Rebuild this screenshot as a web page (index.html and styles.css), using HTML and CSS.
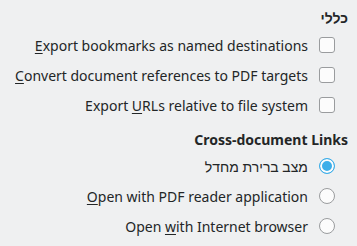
FILE: index.html
```html
<!DOCTYPE html>
<html>
<head>
<meta charset="utf-8">
<link rel="stylesheet" href="styles.css">
</head>
<body>
<div class="page">
  <div class="heading h1">כללי</div>
  <div class="row"><span class="label"><u>E</u>xport bookmarks as named destinations</span><span class="check"></span></div>
  <div class="row"><span class="label"><u>C</u>onvert document references to PDF targets</span><span class="check"></span></div>
  <div class="row"><span class="label">Export <u>U</u>RLs relative to file system</span><span class="check"></span></div>
  <div class="heading h2">Cross-document Links</div>
  <div class="row"><span class="label" dir="rtl">מצב ברירת מחדל</span><span class="radio on"></span></div>
  <div class="row"><span class="label"><u>O</u>pen with PDF reader application</span><span class="radio"></span></div>
  <div class="row"><span class="label">Open <u>w</u>ith Internet browser</span><span class="radio"></span></div>
</div>
</body>
</html>
```
FILE: styles.css
```css
html, body {
  margin: 0;
  padding: 0;
  background: #eff0f1;
}
.page {
  width: 357px;
  height: 246px;
  font-family: "Noto Sans", sans-serif;
  font-size: 14px;
  color: #232627;
  display: flex;
  flex-direction: column;
}
.heading {
  font-weight: bold;
  text-align: right;
  padding-right: 9px;
  display: flex;
  justify-content: flex-end;
  align-items: flex-end;
}
.h1 {
  height: 30px;
  padding-bottom: 3px;
  box-sizing: border-box;
}
.h2 {
  height: 31px;
  padding-bottom: 2px;
  box-sizing: border-box;
}
.row {
  height: 30px;
  display: flex;
  justify-content: flex-end;
  align-items: center;
  gap: 11px;
  padding-right: 22px;
}
.label {
  white-space: nowrap;
}
.label u {
  text-decoration-thickness: 1px;
  text-underline-offset: 2px;
}
.check {
  width: 14px;
  height: 14px;
  border: 1px solid #9a9c9e;
  border-radius: 3px;
  background: #fcfcfc;
  flex: none;
}
.radio {
  width: 14px;
  height: 14px;
  border: 1px solid #9a9c9e;
  border-radius: 50%;
  background: #fcfcfc;
  flex: none;
  box-sizing: content-box;
}
.radio.on {
  border-color: #3daee9;
  background: #3daee9;
  box-shadow: inset 0 0 0 2px #fcfcfc;
}
```
